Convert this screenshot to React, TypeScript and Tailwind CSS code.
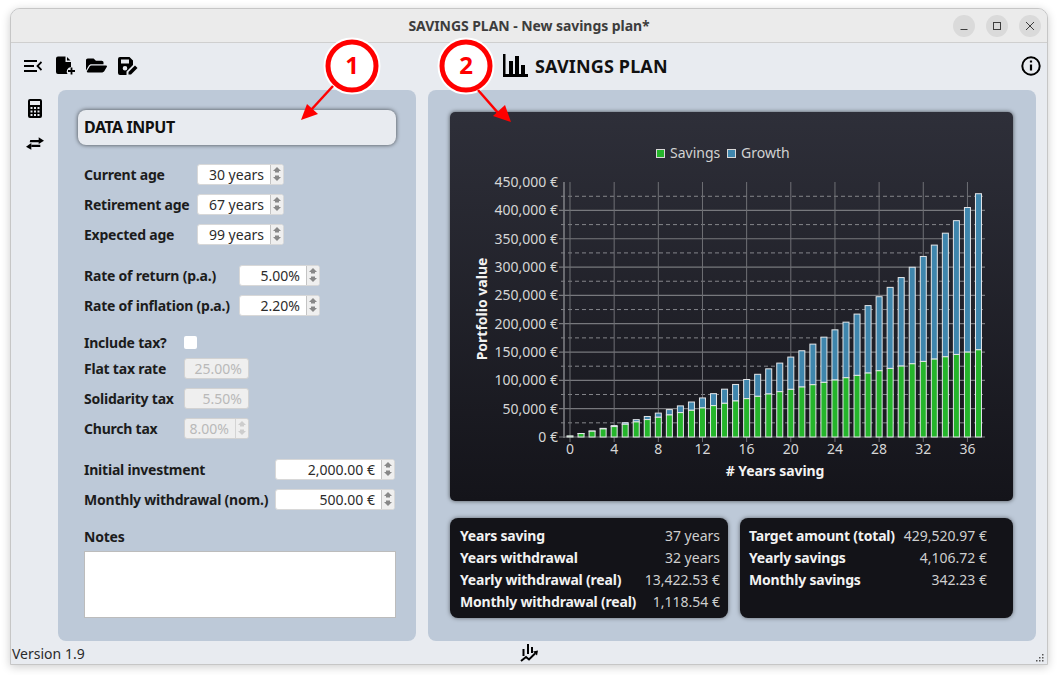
import React from 'react';
import { FaFolderOpen } from 'react-icons/fa';

const font = 'font-["Noto_Sans","Liberation_Sans",sans-serif]';

const SpinButtons: React.FC<{ disabled?: boolean }> = ({ disabled }) => (
	<div className={`flex w-[13px] shrink-0 flex-col items-center justify-center gap-[2px] border-l ${disabled ? 'border-[#d4d4d4] bg-[#efefef]' : 'border-[#c4c4c4] bg-[#efefef]'}`}>
		<svg width="8" height="6" viewBox="0 0 8 6">
			<path d="M4 0 8 4H6v1.500H2V4H0z" fill={disabled ? '#cdcdcd' : '#888'} />
		</svg>
		<svg width="8" height="6" viewBox="0 0 8 6">
			<path d="M4 6 8 2H6V.5H2V2H0z" fill={disabled ? '#cdcdcd' : '#888'} />
		</svg>
	</div>
);

const Spin: React.FC<{ value: string; width: string; disabled?: boolean; noButtons?: boolean }> = ({ value, width, disabled, noButtons }) => (
	<div className={`flex h-[21px] ${width} overflow-hidden rounded-[3px] border ${disabled ? 'border-[#d2d2d2] bg-[#efefef] text-[#b9b9b9]' : 'border-[#d8d8d8] bg-white text-[#2c2c2c]'}`}>
		<div className="flex-1 pr-[6px] text-right text-[14px] leading-[19px]">{value}</div>
		{!noButtons && <SpinButtons disabled={disabled} />}
	</div>
);

const Row: React.FC<{ label: string; labelWidth: string; height?: string; children: React.ReactNode }> = ({ label, labelWidth, height = 'h-[30px]', children }) => (
	<div className={`flex ${height} items-center`}>
		<div className={`${labelWidth} shrink-0 text-[14px] font-bold tracking-[-0.22px] whitespace-nowrap text-[#1c1c1c]`}>{label}</div>
		{children}
	</div>
);

const Stat: React.FC<{ label: string; value: string }> = ({ label, value }) => (
	<div className="flex h-[22px] items-center justify-between whitespace-nowrap">
		<span className="font-bold tracking-[-0.2px] text-[#f2f2f2]">{label}</span>
		<span className="text-[#cfcfcf]">{value}</span>
	</div>
);

const CHART_W = 563;
const CHART_H = 389;
const X0 = 120; // year 0 inside the chart card
const YEAR = 11.04;
const Y0 = 325; // value 0
const PER = 28.32 / 50000;
const yOf = (v: number) => Y0 - v * PER;
const years = Array.from({ length: 38 }, (_, i) => i);
const savings = (i: number) => 2000 + 4106.72 * i;
const total = (i: number) => 2000 * 1.05 ** i + (4106.72 * (1.05 ** i - 1)) / 0.05;

const Chart = () => (
	<svg width={CHART_W} height={CHART_H} viewBox={`0 0 ${CHART_W} ${CHART_H}`} className="block">
		<defs>
			<linearGradient id="bg" x1="0" y1="0" x2="0" y2="1">
				<stop offset="0" stopColor="#2e2f39" />
				<stop offset="1" stopColor="#14141a" />
			</linearGradient>
		</defs>
		<rect width={CHART_W} height={CHART_H} fill="url(#bg)" />
		{/* legend */}
		<rect x="206.5" y="37.5" width="8" height="8" fill="#25b52b" stroke="#d8d8d8" />
		<text x="220" y="46" fontSize="14" fill="#d2d2d2">Savings</text>
		<rect x="277.5" y="37.5" width="8" height="8" fill="#3f86ad" stroke="#d8d8d8" />
		<text x="291" y="46" fontSize="14" fill="#d2d2d2">Growth</text>
		{/* grid */}
		{[25000, 75000, 125000, 175000, 225000, 275000, 325000, 375000, 425000].map((v) => (
			<line key={v} x1="111" x2="533" y1={yOf(v)} y2={yOf(v)} stroke="#85868b" strokeDasharray="4 3" />
		))}
		{[0, 50000, 100000, 150000, 200000, 250000, 300000, 350000, 400000].map((v) => (
			<line key={v} x1="109" x2="535" y1={yOf(v)} y2={yOf(v)} stroke="#77787d" strokeWidth="1.2" />
		))}
		{[0, 4, 8, 12, 16, 20, 24, 28, 32, 36].map((y) => (
			<line key={y} x1={X0 + y * YEAR} x2={X0 + y * YEAR} y1="70" y2="330" stroke="#6f7075" />
		))}
		<line x1="114" x2="114" y1="70" y2="326" stroke="#7c7d82" strokeWidth="1.6" />
		{/* bars */}
		{years.map((i) => {
			const x = X0 + i * YEAR - 3;
			const t = total(i);
			const s = Math.min(savings(i), t);
			return (
				<g key={i}>
					{t > s && <rect x={x} y={yOf(t)} width="6" height={yOf(s) - yOf(t)} fill="#3f86ad" stroke="#e4e7ea" />}
					<rect x={x} y={yOf(s)} width="6" height={Y0 - yOf(s)} fill="#25b52b" stroke="#e4e7ea" />
				</g>
			);
		})}
		{/* labels */}
		{[0, 50000, 100000, 150000, 200000, 250000, 300000, 350000, 400000, 450000].map((v) => (
			<text key={v} x="108" y={yOf(v) + 5} textAnchor="end" fontSize="14" fill="#d6d6d6">
				{v.toLocaleString('en-US')} €
			</text>
		))}
		{[0, 4, 8, 12, 16, 20, 24, 28, 32, 36].map((y) => (
			<text key={y} x={X0 + y * YEAR} y="342" textAnchor="middle" fontSize="14" fill="#d6d6d6">
				{y}
			</text>
		))}
		<text x="325" y="364" textAnchor="middle" fontSize="14" fontWeight="700" letterSpacing="-0.1" fill="#f2f2f2"># Years saving</text>
		<text transform="translate(37 197) rotate(-90)" textAnchor="middle" fontSize="14" fontWeight="700" fill="#f2f2f2">Portfolio value</text>
	</svg>
);

export default function App() {
	return (
		<div className={`relative h-[675px] w-[1058px] overflow-hidden bg-white pt-[8px] pl-[10px] ${font}`}>
			<div className="flex h-[657px] w-[1038px] flex-col overflow-hidden rounded-t-[10px] border border-[#c6c6c6] bg-[#e8ebf0] shadow-[0_2px_10px_rgba(0,0,0,0.2)]">
				{/* title bar */}
				<div className="relative flex h-[34px] shrink-0 items-center justify-center border-b border-[#cfcfcf] bg-[#ebebeb] text-[14px] font-bold tracking-[-0.06px] text-[#3d3d3d]">
					SAVINGS PLAN - New savings plan*
					<div className="absolute top-[6px] right-[6px] flex gap-[11px]">
						{['min', 'max', 'close'].map((b) => (
							<div key={b} className="flex h-[22px] w-[22px] items-center justify-center rounded-full bg-[#dadada]">
								<svg width="10" height="10" viewBox="0 0 10 10" stroke="#3d3d3d" fill="none">
									{b === 'min' && <path d="M1.500 8.500h7" />}
									{b === 'max' && <rect x="1.500" y="1.500" width="7" height="7" />}
									{b === 'close' && <path d="M1 1l8 8M9 1l-8 8" />}
								</svg>
							</div>
						))}
					</div>
				</div>
				{/* toolbar */}
				<div className="flex h-[47px] shrink-0 items-center pr-[6px] pb-[2px]">
					<div className="flex w-[492px] items-center pl-[13px] text-black">
						<svg width="18" height="12" viewBox="0 0 18 12" fill="none" stroke="#000" strokeWidth="1.800">
							<path d="M0 1h13M0 6h10M0 11h13" />
							<path d="M17.500 2 13.500 6l4 4" />
						</svg>
						<svg width="20" height="19" viewBox="0 0 20 19" className="ml-[14px]">
							<path d="M0 2.500A2 2 0 0 1 2 .5h7.500v5.500h5.500v5a4.500 4.500 0 0 0-3.500 7H2a2 2 0 0 1-2-2z" />
							<path d="M11 1 14.500 4.500H11z" />
							<path d="M15.500 11.500v7M12 15h7" stroke="#000" strokeWidth="1.800" />
						</svg>
						<FaFolderOpen size={21} className="ml-[10px]" />
						<svg width="20" height="18" viewBox="0 0 20 18" className="ml-[11px]">
							<path fillRule="evenodd" d="M0 2a2 2 0 0 1 2-2h9.500L15 3.500V8l-6.500 6.500V18H2a2 2 0 0 1-2-2zM3 2.500V6.500h8V2.500zM7 9a2.300 2.300 0 1 0 0 4.600A2.300 2.300 0 0 0 7 9z" />
							<path d="M10.500 17.500v-2.500L17 8.500l2.500 2.500L13 17.500z" />
						</svg>
					</div>
					<svg width="25" height="23" viewBox="0 0 25 23" fill="#000">
						<rect x="0" y="0" width="2.500" height="23" />
						<rect x="0" y="20" width="25" height="3" />
						<rect x="6" y="7" width="4" height="13" />
						<rect x="12" y="2" width="4" height="18" />
						<rect x="18" y="11" width="4" height="9" />
					</svg>
					<div className="ml-[7px] pt-[2px] text-[18px] font-bold tracking-[0.15px] text-[#111]">SAVINGS PLAN</div>
					<svg width="20" height="20" viewBox="0 0 20 20" className="ml-auto" fill="none" stroke="#000">
						<circle cx="10" cy="10" r="8.700" strokeWidth="2" />
						<path d="M10 8.500v6" strokeWidth="2.200" />
						<path d="M10 4.500v2" strokeWidth="2.200" />
					</svg>
				</div>
				{/* main */}
				<div className="flex h-[551px] shrink-0">
					<div className="flex w-[47px] shrink-0 flex-col items-center pt-[9px] text-black">
						<svg width="14" height="19" viewBox="0 0 14 19">
							<path fillRule="evenodd" d="M2 0h10a2 2 0 0 1 2 2v15a2 2 0 0 1-2 2H2a2 2 0 0 1-2-2V2a2 2 0 0 1 2-2zM2 2v4h10V2zM2.500 8v2h2V8zM6 8v2h2V8zM9.500 8v2h2V8zM2.500 11.500v2h2v-2zM6 11.500v2h2v-2zM9.500 11.500v2h2v-2zM2.500 15v2h2v-2zM6 15v2h2v-2zM9.500 15v2h2v-2z" />
						</svg>
						<svg width="18" height="13" viewBox="0 0 17 12" className="mt-[19px]">
							<path d="M4 2.600h8.500V4.800H3.500z" />
							<path d="M12 0l5 3.500-5 3z" />
							<path d="M13.500 9.400H5V7.200H13.500z" />
							<path d="M5 5.500 0 9l5 3z" />
						</svg>
					</div>
					{/* data input panel */}
					<div className="flex w-[358px] shrink-0 flex-col rounded-[8px] bg-[#bdc9d8] px-[20px] py-[20px]">
						<div className="flex h-[35px] shrink-0 items-center rounded-[8px] bg-[#e8ebf0] pb-[2px] pl-[6px] text-[16px] font-bold tracking-[-0.45px] text-[#111] shadow-[0_0_4px_rgba(0,0,0,0.65)]">
							DATA INPUT
						</div>
						<div className="mt-[14px] pl-[6px]">
							<Row label="Current age" labelWidth="w-[113px]"><Spin value="30 years" width="w-[87px]" /></Row>
							<Row label="Retirement age" labelWidth="w-[113px]"><Spin value="67 years" width="w-[87px]" /></Row>
							<Row label="Expected age" labelWidth="w-[113px]"><Spin value="99 years" width="w-[87px]" /></Row>
						</div>
						<div className="mt-[11px] pl-[6px]">
							<Row label="Rate of return (p.a.)" labelWidth="w-[155px]"><Spin value="5.00%" width="w-[81px]" /></Row>
							<Row label="Rate of inflation (p.a.)" labelWidth="w-[155px]"><Spin value="2.20%" width="w-[81px]" /></Row>
						</div>
						<div className="mt-[12px] pl-[6px]">
							<Row label="Include tax?" labelWidth="w-[100px]" height="h-[21px]">
								<div className="h-[13px] w-[13px] rounded-[2px] bg-white" />
							</Row>
							<Row label="Flat tax rate" labelWidth="w-[100px]"><Spin value="25.00%" width="w-[65px]" disabled noButtons /></Row>
							<Row label="Solidarity tax" labelWidth="w-[100px]"><Spin value="5.50%" width="w-[65px]" disabled noButtons /></Row>
							<Row label="Church tax" labelWidth="w-[100px]"><Spin value="8.00%" width="w-[65px]" disabled /></Row>
						</div>
						<div className="mt-[11px] pl-[6px]">
							<Row label="Initial investment" labelWidth="w-[191px]"><Spin value="2,000.00 €" width="w-[120px]" /></Row>
							<Row label="Monthly withdrawal (nom.)" labelWidth="w-[191px]"><Spin value="500.00 €" width="w-[120px]" /></Row>
						</div>
						<div className="mt-[12px] pl-[6px] text-[14px] font-bold tracking-[-0.22px] text-[#1c1c1c]">Notes</div>
						<div className="mt-[4px] ml-[6px] h-[67px] w-[312px] border border-[#bcbcbc] bg-white" />
					</div>
					{/* results panel */}
					<div className="ml-[12px] flex w-[608px] shrink-0 flex-col rounded-[8px] bg-[#bdc9d8] pt-[22px] pl-[22px]">
						<div className="h-[389px] w-[563px] overflow-hidden rounded-[5px] shadow-[0_0_4px_rgba(0,0,0,0.6)]">
							<Chart />
						</div>
						<div className="mt-[17px] flex gap-[12px] text-[14px]">
							<div className="h-[100px] w-[278px] rounded-[8px] bg-[#131318] py-[6px] pr-[8px] pl-[10px] shadow-[0_0_4px_rgba(0,0,0,0.5)]">
								<Stat label="Years saving" value="37 years" />
								<Stat label="Years withdrawal" value="32 years" />
								<Stat label="Yearly withdrawal (real)" value="13,422.53 €" />
								<Stat label="Monthly withdrawal (real)" value="1,118.54 €" />
							</div>
							<div className="h-[100px] w-[273px] rounded-[8px] bg-[#131318] py-[6px] pr-[26px] pl-[9px] shadow-[0_0_4px_rgba(0,0,0,0.5)]">
								<Stat label="Target amount (total)" value="429,520.97 €" />
								<Stat label="Yearly savings" value="4,106.72 €" />
								<Stat label="Monthly savings" value="342.23 €" />
							</div>
						</div>
					</div>
				</div>
				{/* status bar */}
				<div className="relative flex flex-1 items-center pt-[2px] pl-[1px] text-[14px] text-[#2a2a2a]">
					Version 1.9
					<svg width="18" height="18" viewBox="0 0 18 18" className="absolute top-[3px] left-[509px]" fill="none" stroke="#000">
						<path d="M3.500 5v7M8 0v10M12 3v6" strokeWidth="2" />
						<path d="M1 17l5-4 3 2.500 6-6" strokeWidth="2" />
						<path d="M13 7.500l5-1-1 5z" fill="#000" stroke="none" />
					</svg>
					<svg width="10" height="10" viewBox="0 0 10 10" className="absolute right-[2px] bottom-[1px]" fill="#555">
						<rect x="7" y="1" width="1.500" height="1.500" />
						<rect x="4" y="4" width="1.500" height="1.500" />
						<rect x="7" y="4" width="1.500" height="1.500" />
						<rect x="1" y="7" width="1.500" height="1.500" />
						<rect x="4" y="7" width="1.500" height="1.500" />
						<rect x="7" y="7" width="1.500" height="1.500" />
					</svg>
				</div>
			</div>
			{/* annotation callouts */}
			<svg width="1058" height="675" className="pointer-events-none absolute top-0 left-0">
				<circle cx="352" cy="66" r="24" fill="#fff" stroke="#fff" strokeWidth="9" />
				<circle cx="352" cy="66" r="24" fill="#fff" stroke="#f00" strokeWidth="5" />
				<circle cx="466" cy="66" r="24" fill="#fff" stroke="#fff" strokeWidth="9" />
				<circle cx="466" cy="66" r="24" fill="#fff" stroke="#f00" strokeWidth="5" />
				<path d="M333 86 311 110" stroke="#f00" strokeWidth="2.500" />
				<path d="M301 120 307 104 318 114z" fill="#f00" />
				<path d="M478 90 499 114" stroke="#f00" strokeWidth="2.500" />
				<path d="M511 122 493 116 505 105z" fill="#f00" />
				<text x="352" y="74" textAnchor="middle" fontSize="24" fontWeight="700" fill="#f00">1</text>
				<text x="466" y="74" textAnchor="middle" fontSize="24" fontWeight="700" fill="#f00">2</text>
			</svg>
		</div>
	);
}
